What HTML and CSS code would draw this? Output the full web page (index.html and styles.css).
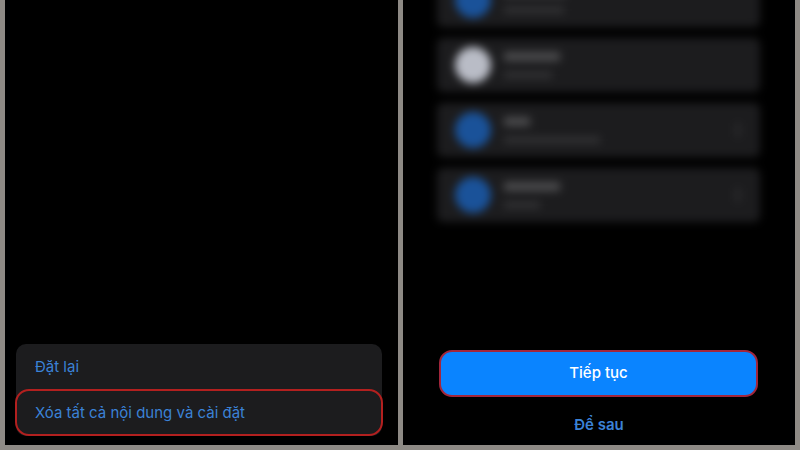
FILE: index.html
```html
<!DOCTYPE html>
<html lang="vi">
<head>
  <meta charset="UTF-8">
  <meta name="viewport" content="width=device-width, initial-scale=1.0">
  <title>Đặt lại</title>
  <link rel="stylesheet" href="styles.css">
</head>
<body>
  <div class="screens">
    <div class="phone phone-left">
      <div class="menu">
        <div class="menu-item">Đặt lại</div>
        <div class="menu-item menu-item-marked">Xóa tất cả nội dung và cài đặt</div>
      </div>
    </div>

    <div class="phone phone-right">
      <div class="apps">
        <div class="app-row">
          <div class="app-icon"></div>
          <div class="app-text">
            <div class="line line-title" style="width: 62px"></div>
            <div class="line" style="width: 60px"></div>
          </div>
        </div>
        <div class="app-row">
          <div class="app-icon app-icon-white"></div>
          <div class="app-text">
            <div class="line line-title" style="width: 56px"></div>
            <div class="line" style="width: 48px"></div>
          </div>
        </div>
        <div class="app-row">
          <div class="app-icon"></div>
          <div class="app-text">
            <div class="line line-title" style="width: 26px"></div>
            <div class="line" style="width: 96px"></div>
          </div>
          <div class="chevron"></div>
        </div>
        <div class="app-row">
          <div class="app-icon"></div>
          <div class="app-text">
            <div class="line line-title" style="width: 56px"></div>
            <div class="line" style="width: 36px"></div>
          </div>
          <div class="chevron"></div>
        </div>
      </div>
      <button class="btn-next">Tiếp tục</button>
      <button class="btn-later">Để sau</button>
    </div>
  </div>
</body>
</html>
```

FILE: styles.css
```css
* {
  box-sizing: border-box;
}

body {
  font-family: Inter, "Liberation Sans", sans-serif;
  margin: 0;
  height: 450px;
  overflow: hidden;
  background-color: #8e8a85;
}

.screens {
  display: grid;
  grid-template-columns: 393px 392px;
  gap: 5px;
  padding: 0 5px;
  height: 445px;
}

.phone {
  min-width: 0;
  background-color: #000;
  overflow: hidden;
  display: flex;
  flex-direction: column;
}

.phone-left {
  justify-content: flex-end;
  padding: 0 16px 9px 11px;
}

.menu {
  background-color: #1c1c1e;
  border-radius: 10px;
  height: 92px;
  display: flex;
  flex-direction: column;
}

.menu-item {
  flex: 1;
  display: flex;
  align-items: center;
  padding-left: 19px;
  font-size: 15px;
  color: #3b82d6;
}

.menu-item-marked {
  flex: none;
  height: 47px;
  margin: 0 -1px;
  padding-left: 18px;
  border: 2px solid #b3201f;
  border-radius: 14px;
}

.apps {
  height: 222px;
  flex-shrink: 0;
  margin: 0 35px 0 34px;
  display: flex;
  flex-direction: column;
  justify-content: flex-end;
  gap: 11px;
  filter: blur(4px);
}

.app-row {
  height: 54px;
  flex-shrink: 0;
  background-color: #1c1c1e;
  border-radius: 6px;
  display: flex;
  align-items: center;
  gap: 13px;
  padding: 0 20px 0 18px;
}

.app-icon {
  width: 36px;
  height: 36px;
  border-radius: 50%;
  background-color: #1a5299;
  flex-shrink: 0;
}

.app-icon-white {
  background-color: #b9bcc6;
}

.app-text {
  flex: 1;
  display: flex;
  flex-direction: column;
  gap: 11px;
}

.line {
  height: 6px;
  background-color: #343436;
}

.line-title {
  height: 9px;
  background-color: #4c4c4e;
}

.chevron {
  width: 4px;
  height: 14px;
  background-color: #2e2e30;
}

.btn-next {
  margin: 128px 37px 0 36px;
  padding-bottom: 3px;
  height: 47px;
  flex-shrink: 0;
  background-color: #0a84ff;
  color: #fff;
  border: 2px solid #a3263c;
  border-radius: 13px;
  font-family: inherit;
  font-size: 15px;
  font-weight: 500;
}

.btn-later {
  margin-top: 18px;
  padding: 0;
  background: none;
  border: none;
  color: #3b82d6;
  font-family: inherit;
  font-size: 15px;
  font-weight: 600;
  text-align: center;
}
```
